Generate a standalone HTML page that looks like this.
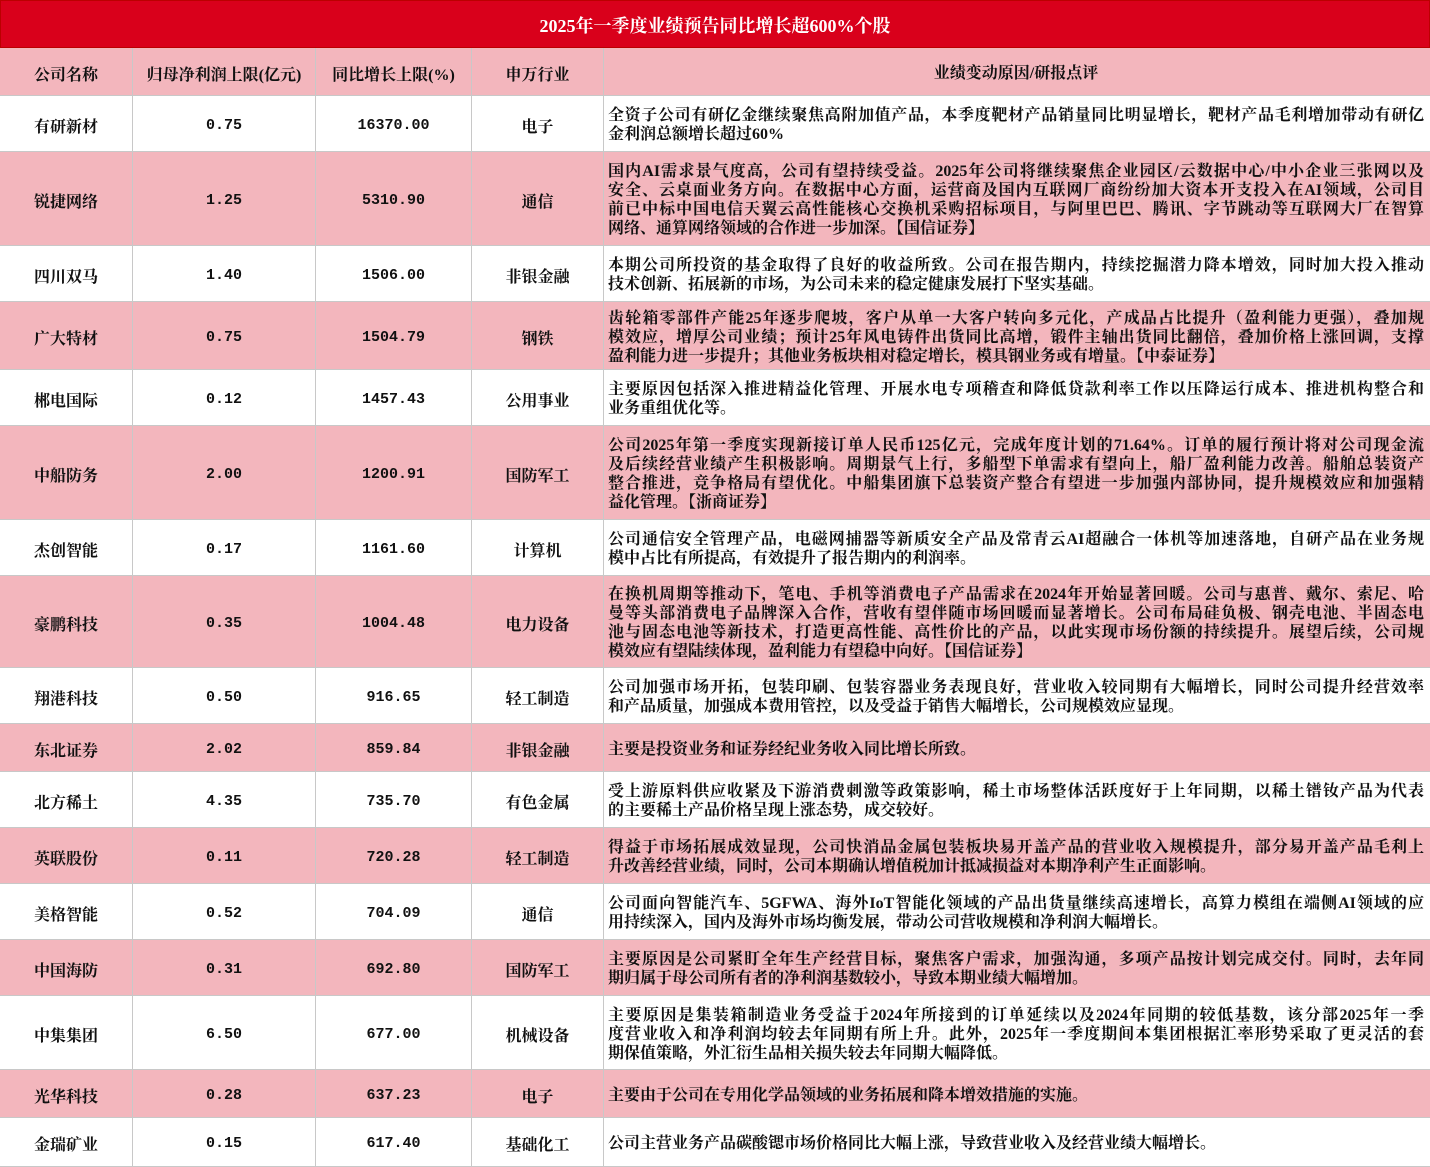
<!DOCTYPE html>
<html><head><meta charset="utf-8"><style>
*{margin:0;padding:0;box-sizing:border-box}
body{width:1430px;height:1167px;background:#fff;font-family:"Liberation Serif","Noto Serif CJK SC",serif;font-weight:700;color:#111;overflow:hidden;position:relative}
.title{position:absolute;left:0;top:0;width:1430px;height:48px;background:#d9001b;color:#fff;font-size:18px;text-align:center;line-height:50px;border:1px solid #b00}
.row{position:absolute;left:0;width:1430px;display:flex;border-bottom:1px solid #c8c8c8}
.row.p{background:#f3b6bd}
.c{border-right:1px solid #c8c8c8;display:flex;align-items:center;justify-content:center;font-size:16px;height:100%;padding-top:3px}
.c1{width:133px}.c2{width:183px}.c3{width:156px}.c4{width:132px}
.c5{width:826px;border-right:none;justify-content:flex-start;padding:3px 6px 0 4px;line-height:19px;font-size:16px}
.c5 span{display:block;width:100%}
.c5 i{display:block;font-style:normal;text-align:justify;text-align-last:justify;white-space:nowrap}
.c5 i.l{text-align-last:left}
.n{font-family:"Liberation Mono",monospace;font-weight:700;font-size:15px}
</style></head><body>
<div class="title">2025年一季度业绩预告同比增长超600%个股</div>

<div class="row p" style="top:48px;height:48px"><div class="c c1">公司名称</div><div class="c c2">归母净利润上限(亿元)</div><div class="c c3">同比增长上限(%)</div><div class="c c4">申万行业</div><div class="c c5" style="justify-content:center">业绩变动原因/研报点评</div></div>

<div class="row" style="top:96px;height:56px"><div class="c c1">有研新材</div><div class="c c2 n">0.75</div><div class="c c3 n">16370.00</div><div class="c c4">电子</div><div class="c c5"><span><i>全资子公司有研亿金继续聚焦高附加值产品，本季度靶材产品销量同比明显增长，靶材产品毛利增加带动有研亿</i><i class="l">金利润总额增长超过60%</i></span></div></div>

<div class="row p" style="top:152px;height:94px"><div class="c c1">锐捷网络</div><div class="c c2 n">1.25</div><div class="c c3 n">5310.90</div><div class="c c4">通信</div><div class="c c5"><span><i>国内AI需求景气度高，公司有望持续受益。2025年公司将继续聚焦企业园区/云数据中心/中小企业三张网以及</i><i>安全、云桌面业务方向。在数据中心方面，运营商及国内互联网厂商纷纷加大资本开支投入在AI领域，公司目</i><i>前已中标中国电信天翼云高性能核心交换机采购招标项目，与阿里巴巴、腾讯、字节跳动等互联网大厂在智算</i><i class="l">网络、通算网络领域的合作进一步加深。【国信证券】</i></span></div></div>

<div class="row" style="top:246px;height:56px"><div class="c c1">四川双马</div><div class="c c2 n">1.40</div><div class="c c3 n">1506.00</div><div class="c c4">非银金融</div><div class="c c5"><span><i>本期公司所投资的基金取得了良好的收益所致。公司在报告期内，持续挖掘潜力降本增效，同时加大投入推动</i><i class="l">技术创新、拓展新的市场，为公司未来的稳定健康发展打下坚实基础。</i></span></div></div>

<div class="row p" style="top:302px;height:68px"><div class="c c1">广大特材</div><div class="c c2 n">0.75</div><div class="c c3 n">1504.79</div><div class="c c4">钢铁</div><div class="c c5"><span><i>齿轮箱零部件产能25年逐步爬坡，客户从单一大客户转向多元化，产成品占比提升（盈利能力更强），叠加规</i><i>模效应，增厚公司业绩；预计25年风电铸件出货同比高增，锻件主轴出货同比翻倍，叠加价格上涨回调，支撑</i><i class="l">盈利能力进一步提升；其他业务板块相对稳定增长，模具钢业务或有增量。【中泰证券】</i></span></div></div>

<div class="row" style="top:370px;height:56px"><div class="c c1">郴电国际</div><div class="c c2 n">0.12</div><div class="c c3 n">1457.43</div><div class="c c4">公用事业</div><div class="c c5"><span><i>主要原因包括深入推进精益化管理、开展水电专项稽查和降低贷款利率工作以压降运行成本、推进机构整合和</i><i class="l">业务重组优化等。</i></span></div></div>

<div class="row p" style="top:426px;height:94px"><div class="c c1">中船防务</div><div class="c c2 n">2.00</div><div class="c c3 n">1200.91</div><div class="c c4">国防军工</div><div class="c c5"><span><i>公司2025年第一季度实现新接订单人民币125亿元，完成年度计划的71.64%。订单的履行预计将对公司现金流</i><i>及后续经营业绩产生积极影响。周期景气上行，多船型下单需求有望向上，船厂盈利能力改善。船舶总装资产</i><i>整合推进，竞争格局有望优化。中船集团旗下总装资产整合有望进一步加强内部协同，提升规模效应和加强精</i><i class="l">益化管理。【浙商证券】</i></span></div></div>

<div class="row" style="top:520px;height:56px"><div class="c c1">杰创智能</div><div class="c c2 n">0.17</div><div class="c c3 n">1161.60</div><div class="c c4">计算机</div><div class="c c5"><span><i>公司通信安全管理产品，电磁网捕器等新质安全产品及常青云AI超融合一体机等加速落地，自研产品在业务规</i><i class="l">模中占比有所提高，有效提升了报告期内的利润率。</i></span></div></div>

<div class="row p" style="top:576px;height:92px"><div class="c c1">豪鹏科技</div><div class="c c2 n">0.35</div><div class="c c3 n">1004.48</div><div class="c c4">电力设备</div><div class="c c5"><span><i>在换机周期等推动下，笔电、手机等消费电子产品需求在2024年开始显著回暖。公司与惠普、戴尔、索尼、哈</i><i>曼等头部消费电子品牌深入合作，营收有望伴随市场回暖而显著增长。公司布局硅负极、钢壳电池、半固态电</i><i>池与固态电池等新技术，打造更高性能、高性价比的产品，以此实现市场份额的持续提升。展望后续，公司规</i><i class="l">模效应有望陆续体现，盈利能力有望稳中向好。【国信证券】</i></span></div></div>

<div class="row" style="top:668px;height:56px"><div class="c c1">翔港科技</div><div class="c c2 n">0.50</div><div class="c c3 n">916.65</div><div class="c c4">轻工制造</div><div class="c c5"><span><i>公司加强市场开拓，包装印刷、包装容器业务表现良好，营业收入较同期有大幅增长，同时公司提升经营效率</i><i class="l">和产品质量，加强成本费用管控，以及受益于销售大幅增长，公司规模效应显现。</i></span></div></div>

<div class="row p" style="top:724px;height:48px"><div class="c c1">东北证券</div><div class="c c2 n">2.02</div><div class="c c3 n">859.84</div><div class="c c4">非银金融</div><div class="c c5"><span><i class="l">主要是投资业务和证券经纪业务收入同比增长所致。</i></span></div></div>

<div class="row" style="top:772px;height:56px"><div class="c c1">北方稀土</div><div class="c c2 n">4.35</div><div class="c c3 n">735.70</div><div class="c c4">有色金属</div><div class="c c5"><span><i>受上游原料供应收紧及下游消费刺激等政策影响，稀土市场整体活跃度好于上年同期，以稀土镨钕产品为代表</i><i class="l">的主要稀土产品价格呈现上涨态势，成交较好。</i></span></div></div>

<div class="row p" style="top:828px;height:56px"><div class="c c1">英联股份</div><div class="c c2 n">0.11</div><div class="c c3 n">720.28</div><div class="c c4">轻工制造</div><div class="c c5"><span><i>得益于市场拓展成效显现，公司快消品金属包装板块易开盖产品的营业收入规模提升，部分易开盖产品毛利上</i><i class="l">升改善经营业绩，同时，公司本期确认增值税加计抵减损益对本期净利产生正面影响。</i></span></div></div>

<div class="row" style="top:884px;height:56px"><div class="c c1">美格智能</div><div class="c c2 n">0.52</div><div class="c c3 n">704.09</div><div class="c c4">通信</div><div class="c c5"><span><i>公司面向智能汽车、5GFWA、海外IoT智能化领域的产品出货量继续高速增长，高算力模组在端侧AI领域的应</i><i class="l">用持续深入，国内及海外市场均衡发展，带动公司营收规模和净利润大幅增长。</i></span></div></div>

<div class="row p" style="top:940px;height:56px"><div class="c c1">中国海防</div><div class="c c2 n">0.31</div><div class="c c3 n">692.80</div><div class="c c4">国防军工</div><div class="c c5"><span><i>主要原因是公司紧盯全年生产经营目标，聚焦客户需求，加强沟通，多项产品按计划完成交付。同时，去年同</i><i class="l">期归属于母公司所有者的净利润基数较小，导致本期业绩大幅增加。</i></span></div></div>

<div class="row" style="top:996px;height:74px"><div class="c c1">中集集团</div><div class="c c2 n">6.50</div><div class="c c3 n">677.00</div><div class="c c4">机械设备</div><div class="c c5"><span><i>主要原因是集装箱制造业务受益于2024年所接到的订单延续以及2024年同期的较低基数，该分部2025年一季</i><i>度营业收入和净利润均较去年同期有所上升。此外，2025年一季度期间本集团根据汇率形势采取了更灵活的套</i><i class="l">期保值策略，外汇衍生品相关损失较去年同期大幅降低。</i></span></div></div>

<div class="row p" style="top:1070px;height:48px"><div class="c c1">光华科技</div><div class="c c2 n">0.28</div><div class="c c3 n">637.23</div><div class="c c4">电子</div><div class="c c5"><span><i class="l">主要由于公司在专用化学品领域的业务拓展和降本增效措施的实施。</i></span></div></div>

<div class="row" style="top:1118px;height:49px"><div class="c c1">金瑞矿业</div><div class="c c2 n">0.15</div><div class="c c3 n">617.40</div><div class="c c4">基础化工</div><div class="c c5"><span><i class="l">公司主营业务产品碳酸锶市场价格同比大幅上涨，导致营业收入及经营业绩大幅增长。</i></span></div></div>
</body></html>
